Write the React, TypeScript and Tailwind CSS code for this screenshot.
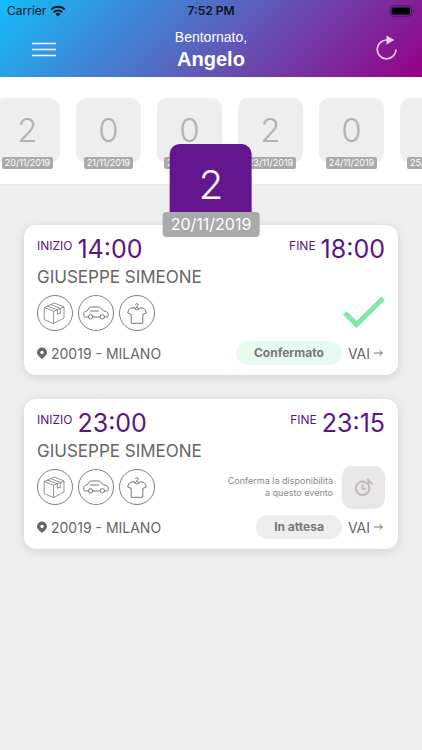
import clsx from 'clsx';

type Shift = {
  id: number;
  start: string;
  end: string;
  name: string;
  place: string;
  confirmed: boolean;
};

const days = [
  { count: 2, date: '20/11/2019' },
  { count: 0, date: '21/11/2019' },
  { count: 0, date: '22/11/2019' },
  { count: 2, date: '23/11/2019' },
  { count: 0, date: '24/11/2019' },
  { count: 0, date: '25/11/2019' },
];

const shifts: Shift[] = [
  { id: 1, start: '14:00', end: '18:00', name: 'GIUSEPPE SIMEONE', place: '20019 - MILANO', confirmed: true },
  { id: 2, start: '23:00', end: '23:15', name: 'GIUSEPPE SIMEONE', place: '20019 - MILANO', confirmed: false },
];

function BoxIcon() {
  return (
    <svg viewBox="0 0 36 36" className="size-9 shrink-0" fill="none" stroke="currentColor" strokeWidth="0.8" strokeLinejoin="round">
      <path d="M7.2 12.6 17.2 8 27 12V23L16.6 28.6 7.2 24.6Z" />
      <path d="M7.2 12.6 16.6 16.2 27 12M16.6 16.2V28.6" />
      <path d="M10.4 11.2 20.4 14.7V19.4L22 18.2 23.4 18.6V13.4L13.8 9.6" />
    </svg>
  );
}

function CarIcon() {
  return (
    <svg viewBox="0 0 36 36" className="size-9 shrink-0" fill="none" stroke="currentColor" strokeWidth="1" strokeLinejoin="round" strokeLinecap="round">
      <path d="M10.4 22H7.3C6.1 22 5.8 21.3 5.8 20.2V18.3C5.8 16.8 7 16.3 9.3 15.8L11.3 12.9C11.8 12.2 12.4 12 13.3 12H20.3C21.4 12 22 12.3 22.8 13.1L25.4 15.9C28.5 16.3 30.2 17.2 30.2 19.2V20.6C30.2 21.6 29.8 22 28.8 22H26.5M14.8 22H22.1" />
      <circle cx="12.6" cy="21.8" r="2.2" />
      <circle cx="24.3" cy="21.8" r="2.2" />
      <path d="M12.5 16H20.5" />
    </svg>
  );
}

function ShirtIcon() {
  return (
    <svg viewBox="0 0 36 36" className="size-9 shrink-0" fill="none" stroke="currentColor" strokeWidth="1" strokeLinejoin="round" strokeLinecap="round">
      <path d="M15 12.8 11.8 13.3C10.3 13.6 9.4 15 8.7 18L12.2 19.4V28.3H23.8V19.4L27.3 18C26.6 15 25.7 13.6 24.2 13.3L21 12.8C20.2 15.6 15.8 15.6 15 12.8Z" />
      <path d="M16.6 9.6C16.8 8.2 19.3 8.3 19.2 9.8C19.1 10.8 18 10.7 18 12.2L16.2 13.6M18 12.2 19.8 13.6" />
    </svg>
  );
}

function PinIcon() {
  return (
    <svg viewBox="0 0 10 12" className="h-3 w-[10px]" fill="currentColor" aria-hidden="true">
      <path fillRule="evenodd" d="M5 0.5A5 5 0 0 1 10 5.4C10 8 7 9.7 5 12 3 9.7 0 8 0 5.4A5 5 0 0 1 5 0.5ZM5 3.8A1.7 1.7 0 1 0 5 7.2 1.7 1.7 0 0 0 5 3.8Z" />
    </svg>
  );
}

function ClockIcon() {
  return (
    <svg viewBox="0 0 20 20" className="size-5" fill="none" stroke="currentColor" aria-hidden="true">
      <circle cx="8.6" cy="11.2" r="6.8" strokeWidth="2" />
      <path d="M8.6 7.6V11.8H11.8" strokeWidth="1.8" />
      <path d="M13.3 2 18.6 7.2M13.4 7 16.2 4.4" strokeWidth="1.9" />
    </svg>
  );
}

function StatusBar() {
  return (
    <div className="grid h-[22px] grid-cols-3 items-center px-[7px] text-[12px] text-[#0b1420]">
      <div className="flex items-center gap-1">
        <span>Carrier</span>
        <svg viewBox="0 0 16 12" className="h-3 w-4" fill="none" stroke="currentColor" strokeWidth="2">
          <path d="M1.2 4.5A9.8 9.8 0 0 1 14.8 4.5M3.7 7.2A6.2 6.2 0 0 1 12.3 7.2" />
          <path d="M8 11.5 5.6 9A3.5 3.5 0 0 1 10.4 9Z" fill="currentColor" stroke="none" />
        </svg>
      </div>
      <span className="text-center font-semibold">7:52 PM</span>
      <svg viewBox="0 0 26 12" className="h-3 w-[26px] justify-self-end">
        <rect x="1" y="0.8" width="21.5" height="10.4" rx="3" fill="none" stroke="#000" strokeOpacity="0.4" />
        <rect x="2.6" y="2.4" width="18.3" height="7.2" rx="1.6" fill="#000" />
        <path d="M24 4.2C25.3 4.8 25.3 7.2 24 7.8Z" fill="#000" fillOpacity="0.5" />
      </svg>
    </div>
  );
}

function Header() {
  return (
    <header className="bg-[linear-gradient(135deg,#14bdfa_0%,#5a62bc_50%,#960086_100%)]">
      <StatusBar />
      <div className="grid h-[55px] grid-cols-[1fr_auto_1fr] items-center px-6 text-white">
        <button type="button" aria-label="Menu" className="justify-self-start pl-2">
          <svg viewBox="0 0 24 16" className="h-4 w-6" stroke="currentColor" strokeWidth="1.7">
            <path d="M0 1.5H24M0 7.5H24M0 13.5H24" />
          </svg>
        </button>
        <h1 className="pb-[2px] text-center font-['Liberation_Sans',sans-serif]">
          <span className="block text-[14px] leading-5">Bentornato,</span>
          <span className="block text-[20px] leading-6 font-bold">Angelo</span>
        </h1>
        <button type="button" aria-label="Aggiorna" className="justify-self-end pb-1 text-[#f0d0f0]">
          <svg viewBox="0 0 24 26" className="h-[26px] w-6" fill="none" stroke="currentColor" strokeWidth="1.7">
            <path d="M13 5A9.4 9.4 0 1 0 22 14.4" />
            <path d="M12.5 0.6V9.6L20.2 5Z" fill="currentColor" stroke="none" />
          </svg>
        </button>
      </div>
    </header>
  );
}

function DayStrip() {
  return (
    <section className="relative border-b border-[#e8e8e8] bg-white pt-[21px] pb-[15px]">
      <div className="-ml-[5px] flex gap-4 overflow-hidden">
        {days.map((day) => (
          <button key={day.date} type="button" className="flex w-[65px] shrink-0 flex-col items-center">
            <span className="flex h-[65px] w-full items-center justify-center rounded-[10px] bg-[#eee] text-[33px] font-light text-[#b3b3b3]">
              {day.count}
            </span>
            <span className="-mt-[6px] rounded-[2px] bg-[#aaa] px-[3px] text-[9px] leading-3 text-white">{day.date}</span>
          </button>
        ))}
      </div>
      <div className="absolute top-[67px] left-1/2 z-10 flex -translate-x-1/2 flex-col items-center text-white">
        <div className="flex h-[82px] w-[82px] items-center justify-center rounded-[10px] bg-[#63168d] text-[40px] font-light">2</div>
        <div className="-mt-[14px] rounded-[4px] bg-[#aaa] px-2 text-[16px] leading-[25px]">20/11/2019</div>
      </div>
    </section>
  );
}

function Time({ label, value }: { label: string; value: string }) {
  return (
    <div className="flex gap-[5px] text-[#5a1585]">
      <span className="pt-[5px] text-[12px] leading-4">{label}</span>
      <span className="text-[25px] leading-8">{value}</span>
    </div>
  );
}

function ShiftCard({ shift }: { shift: Shift }) {
  return (
    <article className="rounded-xl bg-white px-[13px] pt-2 pb-[10px] text-[#666] shadow-[0_2px_10px_rgba(0,0,0,0.12)]">
      <div className="flex justify-between">
        <Time label="INIZIO" value={shift.start} />
        <Time label="FINE" value={shift.end} />
      </div>
      <h2 className="text-[17px] leading-6">{shift.name}</h2>

      <div className="mt-[6px] flex h-9 items-center justify-between">
        <div className="flex gap-[5px]">
          {[BoxIcon, CarIcon, ShirtIcon].map((Icon, index) => (
            <span key={index} className="flex size-9 items-center justify-center rounded-full border border-[#808080] text-[#777]">
              <Icon />
            </span>
          ))}
        </div>
        {shift.confirmed ? (
          <svg viewBox="0 0 42 34" className="h-[34px] w-[42px]" fill="none" stroke="#7fe9a7" strokeWidth="5">
            <path d="M1.8 17 13.5 28.5 40.2 2.2" />
          </svg>
        ) : (
          <div className="flex items-center gap-[9px]">
            <p className="text-right text-[9px] leading-3 text-[#888]">
              Conferma la disponibilità
              <br />a questo evento
            </p>
            <button
              type="button"
              aria-label="Conferma"
              className="flex size-[43px] items-center justify-center rounded-[10px] bg-[#e9e7e8] text-[#bcbabb]"
            >
              <ClockIcon />
            </button>
          </div>
        )}
      </div>

      <div className="mt-[10px] flex h-6 items-center justify-between">
        <p className="flex items-center gap-1 text-[14px]">
          <PinIcon />
          {shift.place}
        </p>
        <div className="flex items-center gap-[6px]">
          <span
            className={clsx(
              'rounded-full px-[18px] text-[12px] leading-6 font-bold text-[#777]',
              shift.confirmed ? 'bg-[#e9fbf1]' : 'bg-[#eee]',
            )}
          >
            {shift.confirmed ? 'Confermato' : 'In attesa'}
          </span>
          <a href="#" className="flex items-center gap-1 pr-[2px] text-[14px]">
            VAI
            <svg viewBox="0 0 9 8" className="h-2 w-[9px]" fill="none" stroke="currentColor" strokeWidth="0.9">
              <path d="M0 4H8.2M5.5 1.3 8.3 4 5.5 6.7" />
            </svg>
          </a>
        </div>
      </div>
    </article>
  );
}

export default function App() {
  return (
    <div className="min-h-screen bg-[#eee] font-['Inter',sans-serif]">
      <Header />
      <DayStrip />
      <main className="flex flex-col gap-6 px-6 pt-10 pb-6">
        {shifts.map((shift) => (
          <ShiftCard key={shift.id} shift={shift} />
        ))}
      </main>
    </div>
  );
}
